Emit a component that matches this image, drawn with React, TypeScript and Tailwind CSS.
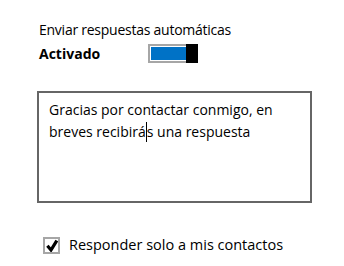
export default function App() {
  return (
    <div className="w-[344px] h-[266px] bg-white pl-[37px] pt-[20px] text-black font-['Open_Sans',sans-serif] flex flex-col">
      {/* Encabezado */}
      <div className="ml-[2px] text-[14px] tracking-[-0.25px] leading-[20px] h-[20px]">Enviar respuestas automáticas</div>

      {/* Estado + interruptor */}
      <div className="ml-[2px] mt-[4px] flex items-start h-[20px]">
        <span className="w-[109px] text-[14px] leading-[20px] font-bold">Activado</span>
        <div className="flex h-[19px] w-[50px]">
          <div className="flex-1 border-2 border-r-0 border-[#a6a6a6] pl-px py-px">
            <div className="h-full bg-[#0072c6]" />
          </div>
          <div className="w-[12px] bg-black" />
        </div>
      </div>

      {/* Mensaje */}
      <div className="mt-[27px] w-[275px] h-[112px] border-2 border-[#666666] pl-[10px] pt-[6px] text-[14px] leading-[22px]">
        Gracias por contactar conmigo, en
        <br />
        breves recibirá
        <span className="inline-block w-px h-[20px] bg-black align-[-5px]" />
        s una respuesta
      </div>

      {/* Opción */}
      <div className="mt-[32px] ml-[6px] flex items-center gap-[9px]">
        <div className="w-[17px] h-[17px] border-2 border-[#a6a6a6] flex items-center justify-center">
          <svg width="13" height="13" viewBox="0 0 13 13">
            <path d="M2.4 6.8 L6 11 L11.8 1.6" fill="none" stroke="black" strokeWidth="3.2" />
          </svg>
        </div>
        <span className="text-[14.5px] leading-[20px]">Responder solo a mis contactos</span>
      </div>
    </div>
  );
}
